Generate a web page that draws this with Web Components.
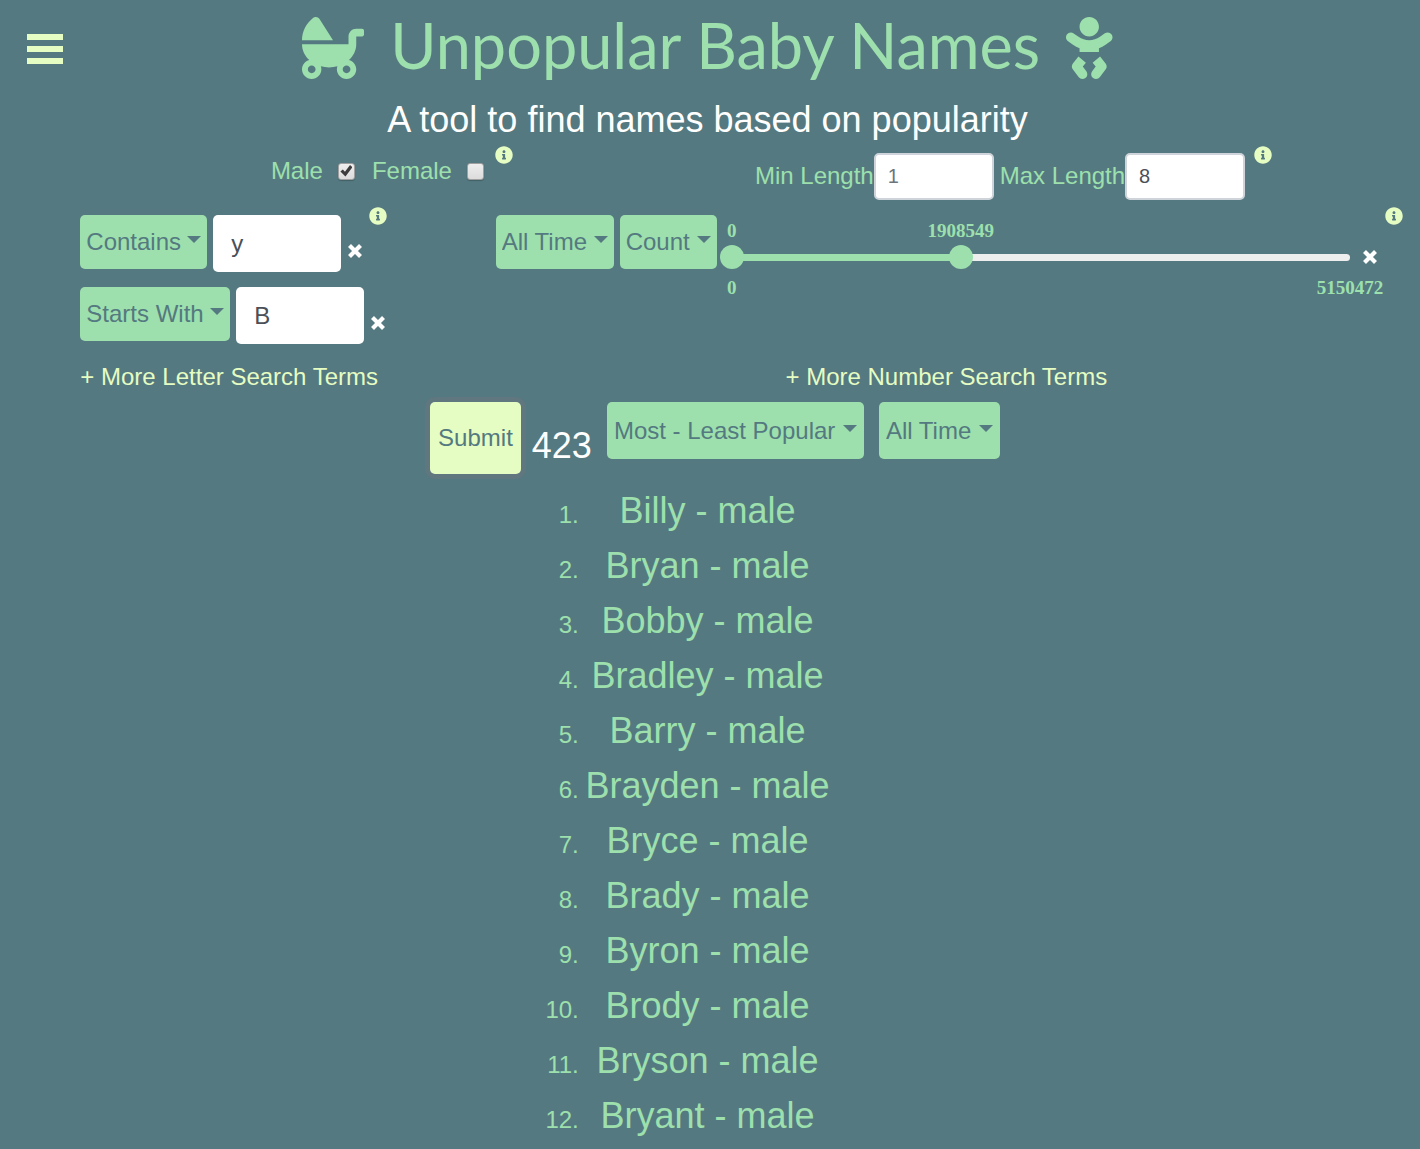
<!DOCTYPE html>
<html lang="en">
<head>
<meta charset="utf-8">
<title>Unpopular Baby Names</title>
<style>
  :root { --bg: #547980; --green: #9de0ad; --lime: #e5fcc2; --ink: #495057; }
  * { box-sizing: border-box; }
  body { margin: 0; background: var(--bg); color: var(--green); font: 24px/36px "Liberation Sans", Arial, sans-serif; }
</style>
</head>
<body>
<baby-names-app></baby-names-app>

<script>
const BASE = `<style>*{box-sizing:border-box} :host{display:block} button,input,select{font:inherit;margin:0}</style>`;
function define(name, markup, setup) {
  customElements.define(name, class extends HTMLElement {
    connectedCallback() {
      if (this.shadowRoot) return;
      const root = this.attachShadow({ mode: 'open' });
      root.innerHTML = BASE + (typeof markup === 'function' ? markup(this) : markup);
      if (setup) setup(root, this);
    }
  });
}

const ICONS = {
  carriage: [512, 'M144.8 17c-11.3-17.8-37.2-22.8-54-9.4C35.3 51.9 0 118 0 192h256L144.8 17zM496 96h-48c-35.3 0-64 28.7-64 64v64H0c0 50.6 23 96.4 60.3 130.7C25.7 363.6 0 394.7 0 432c0 44.2 35.8 80 80 80s80-35.8 80-80c0-8.9-1.8-17.2-4.4-25.2 21.6 5.9 44.6 9.2 68.4 9.2s46.9-3.3 68.4-9.2c-2.7 8-4.4 16.3-4.4 25.2 0 44.2 35.8 80 80 80s80-35.8 80-80c0-37.3-25.7-68.4-60.3-77.3C425 320.4 448 274.6 448 224v-64h48c8.8 0 16-7.2 16-16v-32c0-8.8-7.2-16-16-16zM80 464c-17.6 0-32-14.4-32-32s14.4-32 32-32 32 14.4 32 32-14.4 32-32 32zm320-32c0 17.6-14.4 32-32 32s-32-14.4-32-32 14.4-32 32-32 32 14.4 32 32z'],
  baby: [384, 'M192 160c44.2 0 80-35.8 80-80S236.2 0 192 0s-80 35.8-80 80 35.8 80 80 80zm-53.4 248.8l25.6-32-61.5-51.2L56.8 383c-11.4 14.2-11.7 34.4-.8 49l48 64c7.9 10.5 19.9 16 32 16 8.3 0 16.8-2.6 24-8 17.7-13.2 21.2-38.3 8-56l-29.4-39.2zm142.7-83.2l-61.5 51.2 25.6 32L216 448c-13.2 17.7-9.7 42.8 8 56 7.2 5.4 15.6 8 24 8 12.2 0 24.2-5.5 32-16l48-64c10.9-14.6 10.6-34.8-.8-49l-45.9-57.4zM376.7 145c-12.7-18.1-37.6-22.4-55.7-9.8l-40.6 28.5c-52.7 37-124.2 37-176.8 0L63 135.3C44.9 122.6 20 127 7.3 145-5.4 163.1-1 188 17 200.7l40.6 28.5c17 11.9 35.4 20.9 54.4 27.9V288h160v-30.8c19-7 37.4-16 54.4-27.9l40.6-28.5c18.1-12.8 22.4-37.7 9.7-55.8z'],
  info: [512, 'M256 8C119.043 8 8 119.083 8 256c0 136.997 111.043 248 248 248s248-111.003 248-248C504 119.083 392.957 8 256 8zm0 110c23.196 0 42 18.804 42 42s-18.804 42-42 42-42-18.804-42-42 18.804-42 42-42zm56 254c0 6.627-5.373 12-12 12h-88c-6.627 0-12-5.373-12-12v-24c0-6.627 5.373-12 12-12h12v-64h-12c-6.627 0-12-5.373-12-12v-24c0-6.627 5.373-12 12-12h64c6.627 0 12 5.373 12 12v100h12c6.627 0 12 5.373 12 12v24z']
};

define('glyph-icon', el => {
  const [w, d] = ICONS[el.getAttribute('name')];
  return `<style>svg{display:block;height:var(--size,18px);fill:currentColor}</style>
    <svg viewBox="0 0 ${w} 512" aria-hidden="true"><path d="${d}"/></svg>`;
});

define('info-button', `
  <style>:host{flex:none} button{display:block;padding:0;border:0;background:none;color:var(--lime)}</style>
  <button type="button" aria-label="Help"><glyph-icon name="info"></glyph-icon></button>`);

define('remove-button', `
  <style>:host{flex:none} button{display:block;padding:0;border:0;background:none} svg{display:block;width:14px;height:14px}</style>
  <button type="button" aria-label="Remove"><svg viewBox="0 0 14 14"><path d="M1.5 1.5l11 11M12.5 1.5l-11 11" stroke="#fff" stroke-width="4.2"/></svg></button>`);

define('menu-button', `
  <style>
    button{display:grid;gap:6px;width:36px;padding:0;border:0;background:none}
    span{height:6px;background:var(--lime)}
  </style>
  <button type="button" aria-label="Menu"><span></span><span></span><span></span></button>`);

define('drop-down', el => `
  <style>
    :host{display:grid;flex:none;align-items:center;height:54px;--pad:6px;--caret:20px}
    :host([size=large]){height:57px;--pad:7px;--caret:21px}
    select,i{grid-area:1/1}
    select{appearance:none;height:100%;border:0;border-radius:5px;background:var(--green);color:var(--bg);
      padding:0 calc(var(--pad) + var(--caret)) 0 var(--pad)}
    i{justify-self:end;margin:0 var(--pad) 5px 0;border:7px solid transparent;border-top-color:var(--bg);border-bottom:0;pointer-events:none}
  </style>
  <select aria-label="${el.getAttribute('label')}"><option>${el.textContent.trim()}</option></select><i></i>`);

define('check-field', el => `
  <style>
    :host,label{display:flex;align-items:center}
    label{gap:15px}
    input{appearance:none;display:grid;place-items:center;width:17px;height:17px;border:1px solid #a0a0a0;border-radius:3px;
      background:linear-gradient(#eee,#dcdcdc);box-shadow:0 1px 1px #0003}
    input:checked::before{content:"";width:12px;height:12px;background:#3c3c3c;
      clip-path:polygon(0 55%,20% 38%,38% 56%,80% 0,100% 18%,42% 96%)}
  </style>
  <label>${el.textContent.trim()}<input type="checkbox" ${el.hasAttribute('checked') ? 'checked' : ''}></label>`);

define('length-field', el => `
  <style>
    :host{display:flex}
    label{line-height:45px}
    input{width:120px;height:47px;padding:0 12px;border:2px solid #ced4da;border-radius:5px;background:#fff;color:var(--ink);font-size:20px}
    input::placeholder{color:#6c757d;opacity:1}
  </style>
  <label for="n">${el.textContent.trim()}</label><input id="n" type="text" inputmode="numeric"
    value="${el.getAttribute('value') || ''}" placeholder="${el.getAttribute('placeholder') || ''}">`);

define('letter-term', el => `
  <style>
    :host{display:flex;align-items:flex-start}
    input{width:128px;height:57px;margin:0 7px 0 6px;padding:0 18px;border:0;border-radius:5px;background:#fff;color:var(--ink)}
    remove-button{margin-top:29px}
  </style>
  <drop-down label="Match type">${el.getAttribute('kind')}</drop-down>
  <input type="text" aria-label="Letters" value="${el.getAttribute('value')}">
  <remove-button></remove-button>`);

define('range-slider', el => `
  <style>
    :host{flex:1;min-width:0;font:bold 19px/22px "Liberation Serif","Times New Roman",serif}
    .values{position:relative;height:22px}
    .values output{position:absolute;transform:translateX(-50%)}
    .rail{display:grid;align-items:center;height:24px;margin:3px 0 8px}
    .rail>*{grid-area:1/1}
    .track{height:7px;border-radius:4px;background:linear-gradient(90deg,var(--green) var(--to),#eee var(--to))}
    input{appearance:none;width:calc(100% + 24px);height:24px;margin:0 -12px;background:none;pointer-events:none}
    input::-webkit-slider-thumb{appearance:none;width:24px;height:24px;border-radius:50%;background:var(--green);pointer-events:auto}
    .ends{display:flex;justify-content:space-between}
    .ends span{display:flex;justify-content:center;width:0}
  </style>
  <div class="values"><output id="a"></output><output id="b"></output></div>
  <div class="rail"><div class="track"></div>
    <input id="lo" type="range" aria-label="Lowest count" min="0" max="${el.getAttribute('max')}" value="${el.getAttribute('low')}">
    <input id="hi" type="range" aria-label="Highest count" min="0" max="${el.getAttribute('max')}" value="${el.getAttribute('high')}"></div>
  <div class="ends"><span>0</span><span>${el.getAttribute('max')}</span></div>`,
  (root, el) => {
    const update = () => [['lo', 'a'], ['hi', 'b']].forEach(([input, output]) => {
      const i = root.getElementById(input), o = root.getElementById(output);
      const pct = i.value / i.max * 100 + '%';
      o.textContent = i.value;
      o.style.left = pct;
      if (input === 'hi') root.querySelector('.track').style.setProperty('--to', pct);
    });
    root.addEventListener('input', update);
    update();
  });

define('number-term', `
  <style>
    :host{display:flex;align-items:flex-start}
    drop-down{margin:8px 6px 0 0}
    range-slider{margin:13px 13px 0 9px}
    remove-button{margin:43px 8px 0 0}
  </style>
  <drop-down label="Period">All Time</drop-down>
  <drop-down label="Measure">Count</drop-down>
  <range-slider low="0" high="1908549" max="5150472"></range-slider>
  <remove-button></remove-button>
  <info-button></info-button>`);

define('site-header', `
  <style>
    header{display:grid;grid-template-columns:1fr auto 1fr;height:98px;padding-top:17px}
    menu-button{margin:17px 0 0 27px}
    .brand{display:flex;gap:26px;--size:62px}
    h1{margin:0;font:400 63px/56px Lato,sans-serif}
    p{margin:0;color:#fff;font-size:36px;line-height:44px;text-align:center}
  </style>
  <header>
    <menu-button></menu-button>
    <div class="brand"><glyph-icon name="carriage"></glyph-icon><h1>Unpopular Baby Names</h1><glyph-icon name="baby"></glyph-icon></div>
  </header>
  <p>A tool to find names based on popularity</p>`);

define('basic-filters', `
  <style>
    :host{display:flex;justify-content:center;gap:242px;padding:4px 0 0 128px}
    .group{display:flex;align-items:flex-start}
    check-field{margin:7px 17px 0 0}
    check-field+check-field{margin-right:11px}
    length-field{margin:7px 6px 0 0}
    length-field+length-field{margin-right:9px}
  </style>
  <div class="group"><check-field checked>Male</check-field><check-field>Female</check-field><info-button></info-button></div>
  <div class="group"><length-field placeholder="1">Min Length</length-field><length-field value="8">Max Length</length-field><info-button></info-button></div>`);

define('search-terms', `
  <style>
    :host{display:grid;grid-template-columns:1fr 2fr;margin-top:7px}
    a{color:var(--lime);text-decoration:none}
    .letters{display:grid;justify-content:center;justify-items:start;gap:15px;padding-right:4px}
    .first{display:flex;align-items:flex-start;gap:7px}
    .first letter-term{margin-top:8px}
    .numbers{display:flex;flex-direction:column;justify-content:space-between;padding:0 12px 0 18px}
    .numbers number-term{margin-left:6px}
    .numbers a{align-self:center}
  </style>
  <section class="letters">
    <div class="first"><letter-term kind="Contains" value="y"></letter-term><info-button></info-button></div>
    <letter-term kind="Starts With" value="B"></letter-term>
    <a href="#letters">+ More Letter Search Terms</a>
  </section>
  <section class="numbers">
    <number-term></number-term>
    <a href="#numbers">+ More Number Search Terms</a>
  </section>`);

define('result-bar', `
  <style>
    :host{display:flex;align-items:flex-start;justify-content:center;padding:7px 0 9px 15px}
    button{height:72px;padding:0 8px;border:0;border-radius:5px;background:var(--lime);color:var(--bg);box-shadow:0 0 0 5px #6c757d80}
    strong{margin:17px 15px 0 11px;color:#fff;font-size:36px;font-weight:400;line-height:54px}
    drop-down+drop-down{margin-left:15px}
  </style>
  <button type="submit">Submit</button><strong>423</strong>
  <drop-down size="large" label="Order">Most - Least Popular</drop-down>
  <drop-down size="large" label="Period">All Time</drop-down>`);

define('name-list', `
  <style>
    :host{display:flex;justify-content:center}
    ol{margin:0;padding:0;text-align:center}
    li{line-height:24px}
    span{font-size:36px;line-height:55px}
  </style>
  <ol>${['Billy', 'Bryan', 'Bobby', 'Bradley', 'Barry', 'Brayden', 'Bryce', 'Brady', 'Byron', 'Brody', 'Bryson', 'Bryant']
    .map(n => `<li><span>${n} - male</span></li>`).join('')}</ol>`);

define('baby-names-app', `
  <style>main{padding-right:5px}</style>
  <main>
    <site-header></site-header>
    <form onsubmit="return false">
      <basic-filters></basic-filters>
      <search-terms></search-terms>
      <result-bar></result-bar>
    </form>
    <name-list></name-list>
  </main>`);
</script>
</body>
</html>
